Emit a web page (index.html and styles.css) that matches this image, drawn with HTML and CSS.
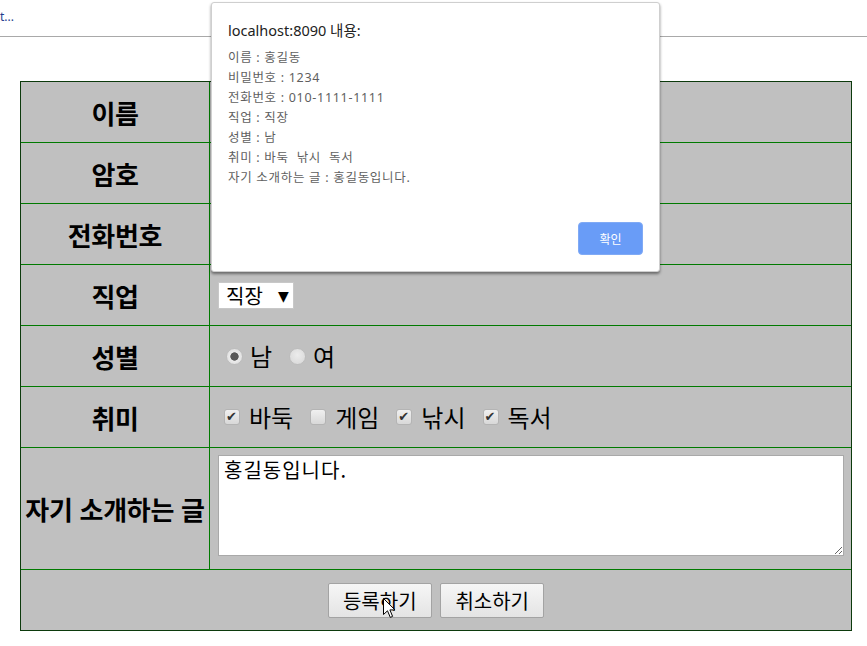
FILE: index.html
```html
<!DOCTYPE html>
<html lang="ko">
<head>
<meta charset="utf-8">
<title>회원 가입</title>
<link rel="stylesheet" href="styles.css">
</head>
<body>
<div class="topbar"><span class="crumb">t...</span></div>
<main class="page">
  <form class="form">
    <table class="signup">
      <tr class="row first">
        <th>이름</th>
        <td><input type="text" class="field" value="홍길동"></td>
      </tr>
      <tr class="row">
        <th>암호</th>
        <td><input type="password" class="field" value="1234"></td>
      </tr>
      <tr class="row">
        <th>전화번호</th>
        <td><input type="text" class="field" value="010-1111-1111"></td>
      </tr>
      <tr class="row">
        <th>직업</th>
        <td>
          <span class="select">
            <select class="select-input"><option>직장</option><option>학생</option></select>
            <span class="select-arrow">▼</span>
          </span>
        </td>
      </tr>
      <tr class="row">
        <th>성별</th>
        <td>
          <div class="choices">
            <label class="opt"><input type="radio" name="gender" class="radio" checked>남</label>
            <label class="opt"><input type="radio" name="gender" class="radio">여</label>
          </div>
        </td>
      </tr>
      <tr class="row">
        <th>취미</th>
        <td>
          <div class="choices">
            <label class="opt"><input type="checkbox" class="check" checked>바둑</label>
            <label class="opt"><input type="checkbox" class="check">게임</label>
            <label class="opt"><input type="checkbox" class="check" checked>낚시</label>
            <label class="opt"><input type="checkbox" class="check" checked>독서</label>
          </div>
        </td>
      </tr>
      <tr class="row tall">
        <th>자기 소개하는 글</th>
        <td class="memo-cell"><textarea class="memo">홍길동입니다.</textarea></td>
      </tr>
      <tr class="row">
        <td colspan="2" class="actions">
          <button type="button" class="btn">등록하기</button>
          <button type="reset" class="btn">취소하기</button>
        </td>
      </tr>
    </table>
  </form>
</main>

<div class="dialog" role="alertdialog">
  <div class="dialog-title">localhost:8090 내용:</div>
  <div class="dialog-body">
    <div>이름 : 홍길동</div>
    <div>비밀번호 : 1234</div>
    <div>전화번호 : 010-1111-1111</div>
    <div>직업 : 직장</div>
    <div>성별 : 남</div>
    <div>취미 : 바둑&nbsp;&nbsp;낚시&nbsp;&nbsp;독서</div>
    <div>자기 소개하는 글 : 홍길동입니다.</div>
  </div>
  <div class="dialog-foot"><button type="button" class="ok">확인</button></div>
</div>

<svg class="cursor" width="13" height="21" viewBox="0 0 13 21">
  <path d="M0.5 0.5 L0.5 16.5 L4.5 12.8 L7.3 19.4 L9.6 18.4 L6.9 11.9 L12 11.9 Z" fill="#fff" stroke="#000" stroke-width="1" stroke-linejoin="miter"/>
</svg>
</body>
</html>
```

FILE: styles.css
```css
* { box-sizing: border-box; }

html, body {
  margin: 0;
  padding: 0;
  background: #fff;
}

body {
  width: 867px;
  height: 646px;
  overflow: hidden;
  position: relative;
  font-family: "Noto Sans CJK KR", "Noto Sans", sans-serif;
  color: #000;
}

.topbar {
  height: 37px;
  border-bottom: 1px solid #a9a9a9;
  padding-top: 9px;
  font-family: "Noto Sans", "Noto Sans CJK KR", sans-serif;
  font-size: 12px;
  line-height: 16px;
}

.crumb { color: #1f3f8f; }

.page { padding: 44px 0 0 20px; }

.form { margin: 0; }

.signup {
  width: 832px;
  table-layout: fixed;
  border: 1px solid #0c3a0c;
  border-spacing: 0;
  border-collapse: separate;
  background: #c0c0c0;
}

.signup th,
.signup td {
  padding: 0;
  border-top: 1px solid #007a00;
  height: 61px;
  vertical-align: middle;
}

.signup .first th,
.signup .first td {
  border-top: none;
  height: 60px;
}

.signup th {
  width: 188px;
  font-size: 26px;
  font-weight: 700;
  text-align: center;
  white-space: nowrap;
  letter-spacing: -0.3px;
}

.signup td { border-left: 1px solid #007a00; padding-left: 8px; }

.field {
  width: 240px;
  height: 28px;
  font-size: 18px;
  border: 1px solid #a9a9a9;
}

.select {
  display: inline-flex;
  align-items: center;
  height: 27px;
  width: 76px;
  background: #fff;
  border: 1px solid #c8c8c8;
  padding: 0 0 0 7px;
  vertical-align: middle;
}

.select-input {
  appearance: none;
  -webkit-appearance: none;
  border: none;
  background: transparent;
  font-family: "Noto Sans CJK KR", sans-serif;
  font-size: 20px;
  line-height: 24px;
  padding: 0;
  margin: 0;
  width: 52px;
  color: #000;
}

.select-arrow {
  font-family: "DejaVu Sans", sans-serif;
  font-size: 14px;
  line-height: 24px;
}

.choices {
  display: flex;
  align-items: center;
  gap: 17px;
  font-size: 24px;
  line-height: 30px;
}

.opt {
  display: inline-flex;
  align-items: center;
}

.radio {
  appearance: none;
  -webkit-appearance: none;
  width: 17px;
  height: 17px;
  margin: 0 7px 0 0;
  border-radius: 50%;
  border: 1px solid #bdbdbd;
  background: radial-gradient(circle at 50% 40%, #ececec, #d6d6d6);
}

.radio:checked {
  background: radial-gradient(circle, #5a5a5a 0 3.8px, #ececec 4.5px, #d6d6d6 100%);
}

.check {
  appearance: none;
  -webkit-appearance: none;
  position: relative;
  width: 16px;
  height: 16px;
  margin: 0 9px 0 0;
  border-radius: 3px;
  border: 1px solid #b4b4b4;
  background: linear-gradient(#f0f0f0, #d8d8d8);
}

.choices .opt:first-child .radio { margin-left: 8px; }
.choices .opt:first-child .check { margin-left: 6px; }

.check:checked::after {
  content: "✔";
  position: absolute;
  left: 1px;
  top: -2px;
  font-family: "DejaVu Sans", sans-serif;
  font-size: 13px;
  line-height: 18px;
  color: #333;
}

.signup .memo-cell {
  height: 122px;
  padding: 7px 7px 13px 8px;
}

.memo {
  display: block;
  width: 626px;
  height: 101px;
  resize: both;
  border: 1px solid #a9a9a9;
  padding: 2px 5px;
  margin: 0;
  font-family: "Noto Sans CJK KR", monospace;
  font-size: 20px;
  line-height: 24px;
  letter-spacing: 1px;
  color: #000;
  background: #fff;
}

.signup .actions {
  border-left: none;
  padding: 0;
  text-align: center;
}

.btn {
  width: 104px;
  height: 35px;
  margin: 0 2px;
  padding: 0;
  font-family: "Noto Sans CJK KR", sans-serif;
  font-size: 20px;
  color: #000;
  border: 1px solid #a3a3a3;
  border-radius: 2px;
  background: linear-gradient(#f6f6f6, #e4e4e4);
}

.dialog {
  position: absolute;
  left: 211px;
  top: 2px;
  width: 449px;
  height: 270px;
  display: flex;
  flex-direction: column;
  padding: 16px;
  background: #fff;
  border: 1px solid #cfcfcf;
  border-radius: 3px;
  box-shadow: 0 2px 3px rgba(0, 0, 0, 0.45);
  font-family: "Noto Sans", "Noto Sans CJK KR", sans-serif;
}

.dialog-title {
  font-size: 14.5px;
  line-height: 22px;
  color: #222;
}

.dialog-body {
  flex: 1;
  margin-top: 7px;
  font-size: 12.5px;
  line-height: 20px;
  letter-spacing: 0.7px;
  color: #5f5f5f;
}

.dialog-foot {
  display: flex;
  justify-content: flex-end;
}

.ok {
  width: 65px;
  height: 33px;
  border: 1px solid #80aaf5;
  border-radius: 4px;
  background: #699cf7;
  color: #fff;
  font-family: "Noto Sans CJK KR", sans-serif;
  font-size: 12px;
}

.cursor {
  position: absolute;
  left: 383px;
  top: 598px;
}
```
